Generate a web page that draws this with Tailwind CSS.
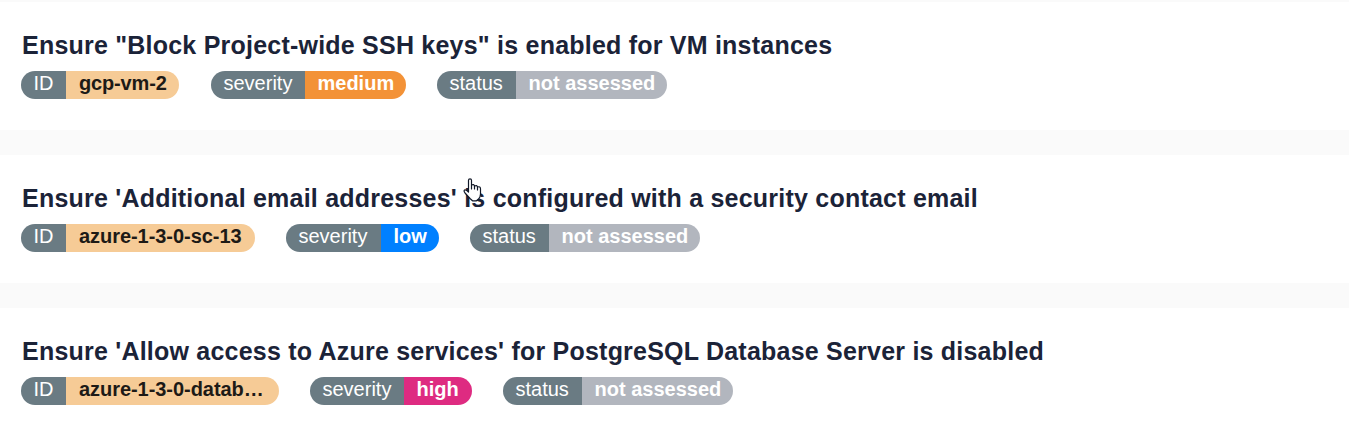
<!DOCTYPE html>
<html lang="en"><head><meta charset="utf-8"><title>Security checks</title><script src="https://cdn.jsdelivr.net/npm/@tailwindcss/browser@4"></script></head>
<body class="bg-[#fafafa] h-[435px] overflow-hidden font-['Liberation_Sans',Arial,sans-serif] pt-[2px]">
<main class="relative flex flex-col gap-[25px]">
<section class="bg-white h-32 px-[21px] pt-[27px]">
<h2 class="pl-px text-[25px] leading-8 font-bold tracking-[0.22px] text-[#1b2338] whitespace-nowrap">Ensure "Block Project-wide SSH keys" is enabled for VM instances</h2>
<div class="mt-[10px] flex text-[20px] leading-[25px] h-7 text-white whitespace-nowrap">
<div class="flex rounded-full overflow-hidden w-[158px] mr-8"><span class="bg-[#6a7b83] w-[45px] pl-[12.5px]">ID</span><b class="bg-[#f6cb96] text-[#1d1a16] flex-1 pl-[13px] tracking-[-0.15px]">gcp-vm-2</b></div>
<div class="flex rounded-full overflow-hidden w-[195px] mr-[31px]"><span class="bg-[#6a7b83] w-[94px] pl-[12.5px]">severity</span><b class="bg-[#f39237] flex-1 pl-[12.5px]">medium</b></div>
<div class="flex rounded-full overflow-hidden w-[230px]"><span class="bg-[#6a7b83] w-[79px] pl-[12.5px]">status</span><b class="bg-[#b2b6be] flex-1 pl-[12.5px]">not assessed</b></div>
</div></section>
<section class="bg-white h-32 px-[21px] pt-[27px]">
<h2 class="pl-px text-[25px] leading-8 font-bold tracking-[0.22px] text-[#1b2338] whitespace-nowrap">Ensure 'Additional email addresses' is configured with a security contact email</h2>
<div class="mt-[10px] flex text-[20px] leading-[25px] h-7 text-white whitespace-nowrap">
<div class="flex rounded-full overflow-hidden w-[234px] mr-[31px]"><span class="bg-[#6a7b83] w-[45px] pl-[12.5px]">ID</span><b class="bg-[#f6cb96] text-[#1d1a16] flex-1 pl-[13px] tracking-[-0.05px]">azure-1-3-0-sc-13</b></div>
<div class="flex rounded-full overflow-hidden w-[153px] mr-[31px]"><span class="bg-[#6a7b83] w-[95px] pl-[12.5px]">severity</span><b class="bg-[#0080ff] flex-1 pl-[12.5px]">low</b></div>
<div class="flex rounded-full overflow-hidden w-[230px]"><span class="bg-[#6a7b83] w-[79px] pl-[12.5px]">status</span><b class="bg-[#b2b6be] flex-1 pl-[12.5px]">not assessed</b></div>
</div></section>
<section class="bg-white h-32 px-[21px] pt-[27px]">
<h2 class="pl-px text-[25px] leading-8 font-bold tracking-[0.22px] text-[#1b2338] whitespace-nowrap">Ensure 'Allow access to Azure services' for PostgreSQL Database Server is disabled</h2>
<div class="mt-[10px] flex text-[20px] leading-[25px] h-7 text-white whitespace-nowrap">
<div class="flex rounded-full overflow-hidden w-[258px] mr-[31px]"><span class="bg-[#6a7b83] w-[45px] pl-[12.5px]">ID</span><b class="bg-[#f6cb96] text-[#1d1a16] flex-1 pl-[13px] tracking-[-0.05px]">azure-1-3-0-datab…</b></div>
<div class="flex rounded-full overflow-hidden w-[162px] mr-[31px]"><span class="bg-[#6a7b83] w-[94px] pl-[12.5px]">severity</span><b class="bg-[#de2b81] flex-1 pl-[12.5px]">high</b></div>
<div class="flex rounded-full overflow-hidden w-[230px]"><span class="bg-[#6a7b83] w-[79px] pl-[12.5px]">status</span><b class="bg-[#b2b6be] flex-1 pl-[12.5px]">not assessed</b></div>
</div></section>
<svg class="absolute left-[463px] top-[176px] w-[19px] h-[24px]" viewBox="0 0 19 24" fill="white" stroke="#111827" stroke-width="1.2" stroke-linejoin="round" stroke-linecap="round"><path d="M5.5 14V2.2Q5.5 .8 7 .8T8.5 2.2V7Q11 5.8 11.5 8Q14 6.8 14.5 9Q17.5 8 17.5 11V16Q17.5 19 15.5 21L13.5 22.8H9.5L7 20.5L2 15Q.5 13 1.5 12Q3 11.2 5.5 14Z"/><path fill="none" d="M8.5 7V11M11.5 8V11M14.5 9V12"/></svg>
</main></body></html>
